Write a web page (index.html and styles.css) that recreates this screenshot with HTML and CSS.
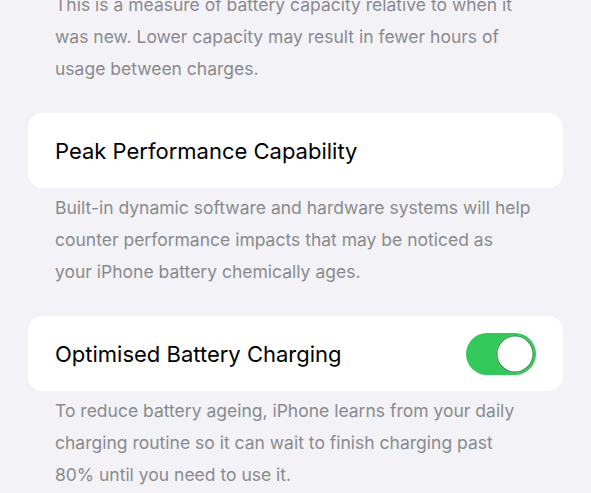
FILE: index.html
```html
<!DOCTYPE html>
<html>
<head>
  <title>Battery Health</title>
  <link rel="stylesheet" href="styles.css">
</head>
<body>
  <div class="settings">
    <!-- Maximum capacity footer -->
    <p class="footer">This is a measure of battery capacity relative to when it was new. Lower capacity may result in fewer hours of usage between charges.</p>

    <div class="group">
      <div class="row">
        <span class="row-label">Peak Performance Capability</span>
      </div>
    </div>
    <p class="footer">Built-in dynamic software and hardware systems will help counter performance impacts that may be noticed as your iPhone battery chemically ages.</p>

    <div class="group">
      <div class="row">
        <span class="row-label">Optimised Battery Charging</span>
        <span class="switch on"><span class="knob"></span></span>
      </div>
    </div>
    <p class="footer">To reduce battery ageing, iPhone learns from your daily charging routine so it can wait to finish charging past 80% until you need to use it.</p>
  </div>
</body>
</html>
```

FILE: styles.css
```css
html, body {
  margin: 0;
  padding: 0;
}

body {
  background-color: #f2f2f7;
  font-family: Inter, "Noto Sans", sans-serif;
  overflow: hidden;
}

/* List of grouped rows */
.settings {
  display: flex;
  flex-direction: column;
  margin-top: -15px;
  padding: 0 28px;
}

/* Grey text under each group */
.footer {
  margin: 4px 0 28px;
  padding: 0 30px 0 27px;
  color: #8a8a8e;
  font-size: 17.5px;
  line-height: 32px;
}

.group {
  background-color: #fff;
  border-radius: 15px;
}

.row {
  display: flex;
  align-items: center;
  justify-content: space-between;
  height: 75px;
  padding: 0 27px;
}

.row-label {
  color: #000;
  font-size: 22px;
}

/* Toggle switch */
.switch {
  display: flex;
  align-items: center;
  width: 70px;
  height: 42px;
  border-radius: 21px;
  background-color: #e9e9eb;
  padding: 2px;
  box-sizing: border-box;
  margin-right: 0;
}

.switch.on {
  background-color: #34c759;
  justify-content: flex-end;
}

.knob {
  width: 38px;
  height: 38px;
  border-radius: 50%;
  background-color: #fff;
  box-shadow: 0 0 0 1.5px #2f9e4c inset;
}
```
